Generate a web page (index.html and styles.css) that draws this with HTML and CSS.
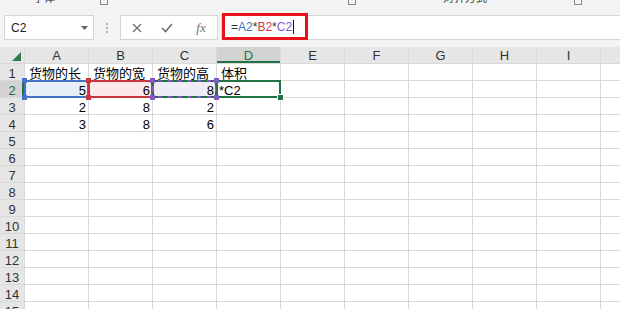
FILE: index.html
```html
<!DOCTYPE html>
<html lang="zh-CN">
<head>
    <meta charset="UTF-8">
    <meta name="viewport" content="width=device-width, initial-scale=1.0">
    <title>货物体积</title>
    <link rel="stylesheet" href="styles.css">
</head>
<body>

    <!-- bottom edge of the ribbon, mostly scrolled out of view -->
    <div class="ribbon">
        <span class="rb-text rb-1">字体</span>
        <span class="rb-launch rb-2"></span>
        <span class="rb-launch rb-3"></span>
        <span class="rb-text rb-4">对齐方式</span>
        <span class="rb-launch rb-5"></span>
    </div>

    <div class="formula-bar">
        <div class="name-box">
            <span>C2</span>
            <svg class="dropdown" width="7" height="4" viewBox="0 0 7 4"><polygon points="0,0 7,0 3.5,4" fill="#666"/></svg>
        </div>
        <div class="grip"><i></i><i></i><i></i></div>
        <div class="fx-box">
            <span class="fx-btn">
                <svg width="10" height="10" viewBox="0 0 10 10"><path d="M1 1 L9 9 M9 1 L1 9" stroke="#707070" stroke-width="1.3" fill="none"/></svg>
            </span>
            <span class="fx-btn">
                <svg width="12" height="10" viewBox="0 0 12 10"><path d="M1 5 L4.5 8.5 L11 1" stroke="#707070" stroke-width="1.6" fill="none"/></svg>
            </span>
            <span class="fx-btn fx-label">fx</span>
        </div>
        <div class="formula-input">
            <span class="formula-mark"><span class="f-eq">=</span><span class="f-blue">A2</span>*<span class="f-red">B2</span>*<span class="f-purple">C2</span><span class="caret"></span></span>
        </div>
    </div>

    <div class="sheet">
        <div class="corner">
            <svg width="24" height="16" viewBox="0 0 24 16"><polygon points="21,5 21,14 12,14" fill="#2f7a45"/></svg>
        </div>
        <div class="ch">A</div><div class="ch">B</div><div class="ch">C</div><div class="ch col-sel">D</div><div class="ch">E</div><div class="ch">F</div><div class="ch">G</div><div class="ch">H</div><div class="ch">I</div><div class="ch"></div>

        <div class="rh">1</div><div class="txt">货物的长</div><div class="txt">货物的宽</div><div class="txt">货物的高</div><div class="txt">体积</div><div></div><div></div><div></div><div></div><div></div><div></div>
        <div class="rh row-sel">2</div><div class="num ref ref-a">5</div><div class="num ref ref-b">6</div><div class="num ref ref-c">8</div><div class="txt active">*C2</div><div></div><div></div><div></div><div></div><div></div><div></div>
        <div class="rh">3</div><div class="num">2</div><div class="num">8</div><div class="num">2</div><div></div><div></div><div></div><div></div><div></div><div></div><div></div>
        <div class="rh">4</div><div class="num">3</div><div class="num">8</div><div class="num">6</div><div></div><div></div><div></div><div></div><div></div><div></div><div></div>
        <div class="rh">5</div><div></div><div></div><div></div><div></div><div></div><div></div><div></div><div></div><div></div><div></div>
        <div class="rh">6</div><div></div><div></div><div></div><div></div><div></div><div></div><div></div><div></div><div></div><div></div>
        <div class="rh">7</div><div></div><div></div><div></div><div></div><div></div><div></div><div></div><div></div><div></div><div></div>
        <div class="rh">8</div><div></div><div></div><div></div><div></div><div></div><div></div><div></div><div></div><div></div><div></div>
        <div class="rh">9</div><div></div><div></div><div></div><div></div><div></div><div></div><div></div><div></div><div></div><div></div>
        <div class="rh">10</div><div></div><div></div><div></div><div></div><div></div><div></div><div></div><div></div><div></div><div></div>
        <div class="rh">11</div><div></div><div></div><div></div><div></div><div></div><div></div><div></div><div></div><div></div><div></div>
        <div class="rh">12</div><div></div><div></div><div></div><div></div><div></div><div></div><div></div><div></div><div></div><div></div>
        <div class="rh">13</div><div></div><div></div><div></div><div></div><div></div><div></div><div></div><div></div><div></div><div></div>
        <div class="rh">14</div><div></div><div></div><div></div><div></div><div></div><div></div><div></div><div></div><div></div><div></div>
        <div class="rh">15</div><div></div><div></div><div></div><div></div><div></div><div></div><div></div><div></div><div></div><div></div>
    </div>

</body>
</html>
```

FILE: styles.css
```css
body {
    margin: 0;
    height: 309px;
    overflow: hidden;
    background-color: #f3f3f3;
    font-family: "Liberation Sans", "Noto Sans CJK SC", sans-serif;
}

/* ribbon leftovers */
.ribbon {
    height: 5px;
    overflow: hidden;
    display: flex;
    align-items: flex-end;
}

.rb-text {
    font-size: 11px;
    line-height: 14px;
    color: #444;
    white-space: nowrap;
}

.rb-launch {
    width: 6px;
    height: 12px;
    border: 1px solid #8a8a8a;
    flex-shrink: 0;
}

.rb-1 { margin-left: 33px; width: 22px; }
.rb-2 { margin-left: 45px; }
.rb-3 { margin-left: 240px; }
.rb-4 { margin-left: 87px; width: 44px; }
.rb-5 { margin-left: 87px; }

/* formula bar */
.formula-bar {
    height: 42px;
    padding-top: 10px;
    box-sizing: border-box;
    display: flex;
    align-items: flex-start;
}

.name-box {
    margin-left: 4px;
    width: 90px;
    height: 25px;
    box-sizing: border-box;
    background-color: white;
    border: 1px solid #d5d5d5;
    display: flex;
    align-items: center;
    justify-content: space-between;
    padding: 0 5px 0 6px;
    font-size: 12px;
    color: #222;
}

.grip {
    margin-left: 12px;
    margin-top: 8px;
    display: flex;
    flex-direction: column;
    gap: 2px;
}

.grip i {
    width: 2px;
    height: 2px;
    background-color: #b5b5b5;
}

.fx-box {
    margin-left: 12px;
    width: 98px;
    height: 25px;
    box-sizing: border-box;
    background-color: white;
    border: 1px solid #d5d5d5;
    display: flex;
    align-items: center;
    padding-left: 1px;
}

.fx-btn {
    width: 30px;
    display: flex;
    justify-content: center;
}

.fx-label {
    width: 34px;
    padding-left: 4px;
    box-sizing: border-box;
    font-family: "Liberation Serif", serif;
    font-style: italic;
    font-size: 13px;
    color: #707070;
}

.formula-input {
    flex: 1;
    margin-left: 3px;
    height: 25px;
    box-sizing: border-box;
    background-color: white;
    border: 1px solid #d5d5d5;
    border-right: none;
    display: flex;
    align-items: flex-start;
}

.formula-mark {
    margin-top: -3px;
    width: 86px;
    height: 27px;
    box-sizing: border-box;
    border: 3px solid #e8121b;
    padding-left: 6px;
    display: flex;
    align-items: center;
    font-size: 12px;
    color: #333;
}

.f-blue { color: #3b6fcb; }
.f-red { color: #d23a43; }
.f-purple { color: #8259c9; }

.caret {
    width: 1px;
    height: 14px;
    margin-left: 1px;
    background-color: #111;
}

/* worksheet */
.sheet {
    display: grid;
    grid-template-columns: 24px repeat(9, 63px) 1fr;
    grid-auto-rows: 16px;
    gap: 1px;
    background-color: #d9d9d9;
}

.sheet > div {
    background-color: white;
    font-size: 13px;
    line-height: 20px;
    color: #000;
    white-space: nowrap;
    min-width: 0;
}

.sheet > .corner,
.sheet > .ch,
.sheet > .rh {
    background-color: #e6e6e6;
    text-align: center;
    color: #333;
}

.sheet > .ch {
    line-height: 18px;
}

.sheet > .col-sel {
    background-color: #d2d2d2;
    color: #217346;
    box-shadow: inset 0 -2px #217346;
}

.sheet > .row-sel {
    background-color: #d2d2d2;
    color: #2f6b45;
    box-shadow: inset -2px 0 #217346;
}

.corner svg {
    display: block;
}

.txt {
    padding-left: 4px;
}

.num {
    text-align: right;
    padding-right: 2px;
}

/* cells referenced by the formula */
.ref {
    position: relative;
    outline-width: 2px;
    outline-style: solid;
    outline-offset: -1px;
}

.ref::after {
    content: "";
    position: absolute;
    z-index: 2;
    left: -3px;
    top: -3px;
    width: 5px;
    height: 5px;
}

.sheet > .ref-a { background-color: #e8eef8; outline-color: #4472c4; }
.ref-a::after {
    background-color: #4472c4;
    box-shadow: 64px 0 #4472c4, 0 17px #4472c4, 64px 17px #4472c4;
}

.sheet > .ref-b { background-color: #fbe8e8; outline-color: #c8353d; }
.ref-b::after {
    background-color: #c8353d;
    box-shadow: 64px 0 #c8353d, 0 17px #c8353d, 64px 17px #c8353d;
}

.sheet > .ref-c { background-color: #efecf7; outline-color: #8359c8; }
.ref-c::before {
    content: "";
    position: absolute;
    z-index: 1;
    inset: -1px;
    border: 2px dashed #217346;
}
.ref-c::after {
    background-color: #8359c8;
    box-shadow: 64px 0 #8359c8, 0 17px #8359c8, 64px 17px #8359c8;
}

/* cell being edited */
.active {
    position: relative;
    outline: 2px solid #217346;
    outline-offset: -1px;
}

.sheet > .active {
    padding-left: 2px;
}

.active::after {
    content: "";
    position: absolute;
    right: -3px;
    bottom: -3px;
    width: 5px;
    height: 5px;
    background-color: #217346;
    box-shadow: 0 0 0 1px white;
}
```
